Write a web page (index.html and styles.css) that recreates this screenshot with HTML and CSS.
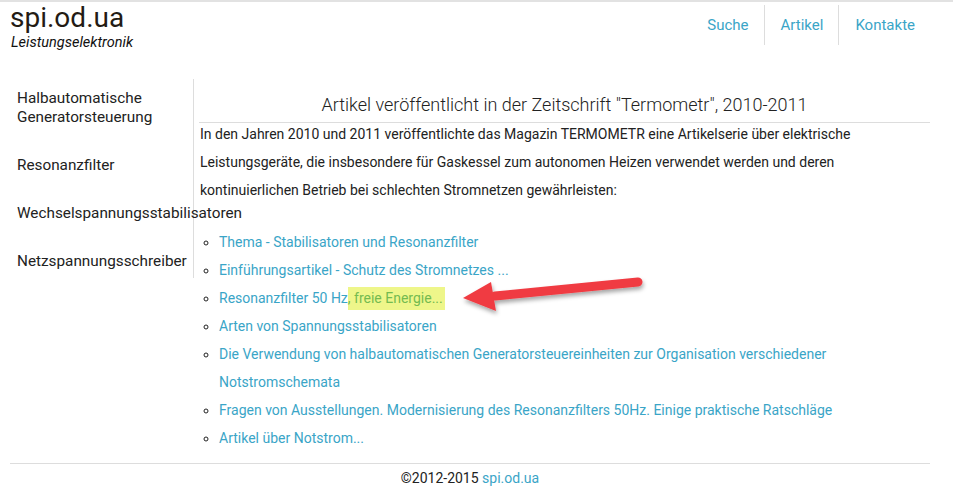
FILE: index.html
```html
<!DOCTYPE html>
<html lang="de">
<head>
    <meta charset="UTF-8">
    <meta name="viewport" content="width=device-width, initial-scale=1.0">
    <title>spi.od.ua - Leistungselektronik</title>
    <link rel="stylesheet" href="styles.css">
</head>
<body>
    <header class="kopf">
        <div class="logo">
            <div class="logo-name">spi.od.ua</div>
            <div class="logo-sub">Leistungselektronik</div>
        </div>
        <ul class="nav">
            <li><a href="#">Suche</a></li>
            <li><a href="#">Artikel</a></li>
            <li><a href="#">Kontakte</a></li>
        </ul>
    </header>

    <div class="haupt">
        <ul class="seitenmenu">
            <li><a href="#">Halbautomatische Generatorsteuerung</a></li>
            <li><a href="#">Resonanzfilter</a></li>
            <li><a href="#">Wechselspannungsstabilisatoren</a></li>
            <li><a href="#">Netzspannungsschreiber</a></li>
        </ul>

        <div class="inhalt">
            <h1>Artikel veröffentlicht in der Zeitschrift "Termometr", 2010-2011</h1>
            <p class="einleitung">In den Jahren 2010 und 2011 veröffentlichte das Magazin TERMOMETR eine Artikelserie über elektrische Leistungsgeräte, die insbesondere für Gaskessel zum autonomen Heizen verwendet werden und deren kontinuierlichen Betrieb bei schlechten Stromnetzen gewährleisten:</p>
            <ul class="artikel">
                <li><a href="#">Thema - Stabilisatoren und Resonanzfilter</a></li>
                <li><a href="#">Einführungsartikel - Schutz des Stromnetzes ...</a></li>
                <li><a href="#">Resonanzfilter 50 Hz<span class="markiert">, freie Energie...</span></a></li>
                <li><a href="#">Arten von Spannungsstabilisatoren</a></li>
                <li><a href="#">Die Verwendung von halbautomatischen Generatorsteuereinheiten zur Organisation verschiedener Notstromschemata</a></li>
                <li><a href="#">Fragen von Ausstellungen. Modernisierung des Resonanzfilters 50Hz. Einige praktische Ratschläge</a></li>
                <li><a href="#">Artikel über Notstrom...</a></li>
            </ul>
        </div>
    </div>

    <footer class="fuss">
        ©2012-2015 <a href="#">spi.od.ua</a>
    </footer>

    <!-- roter Pfeil ueber dem Inhalt -->
    <svg class="pfeil" width="200" height="50" viewBox="0 0 200 50">
        <defs>
            <filter id="schatten" x="-10%" y="-30%" width="120%" height="180%">
                <feDropShadow dx="1" dy="3" stdDeviation="2" flood-color="#000" flood-opacity="0.35"/>
            </filter>
        </defs>
        <g filter="url(#schatten)">
            <line x1="40" y1="27" x2="183" y2="13" stroke="#f03b42" stroke-width="9" stroke-linecap="round"/>
            <polygon points="8,29 36,13 41,42" fill="#f03b42"/>
        </g>
    </svg>
</body>
</html>
```

FILE: styles.css
```css
body {
    font-family: Roboto, "Liberation Sans", Arial, sans-serif;
    margin: 0;
    color: #222;
    background-color: #fff;
    border-top: 2px solid #e2e2e2;
    position: relative;
}
a {
    color: #3aa5c7;
    text-decoration: none;
}
.kopf {
    display: flex;
    justify-content: space-between;
    padding: 0 23px 0 10px;
    height: 77px;
}
.logo-name {
    font-size: 28px;
    line-height: 32px;
    color: #231b14;
}
.logo-sub {
    font-size: 14.5px;
    font-style: italic;
    line-height: 18px;
    margin-top: 0;
    margin-left: 1px;
    color: #111;
}
.nav {
    list-style: none;
    margin: 3px 0 0 0;
    padding: 0;
    display: flex;
    height: 40px;
}
.nav li + li {
    border-left: 1px solid #ddd;
}
.nav a {
    display: block;
    padding: 0 15px 0 16px;
    line-height: 40px;
    font-size: 15px;
}
.haupt {
    display: flex;
    align-items: flex-start;
    padding: 0 23px 0 10px;
}
.seitenmenu {
    list-style: none;
    margin: 0;
    padding: 10px 0 7px 7px;
    width: 176px;
    border-right: 1px solid #ddd;
    font-size: 15.3px;
    line-height: 19px;
}
.seitenmenu li {
    margin-bottom: 29px;
    white-space: nowrap;
}
.seitenmenu li:first-child {
    white-space: normal;
}
.seitenmenu li:last-child {
    margin-bottom: 0;
}
.seitenmenu a {
    color: #222;
}
.inhalt {
    flex: 1;
    padding-left: 5px;
    font-size: 14px;
}
.inhalt h1 {
    font-size: 18px;
    font-weight: 300;
    line-height: 24px;
    text-align: center;
    margin: 14px 0 0 0;
    padding-bottom: 5px;
    border-bottom: 1px solid #ddd;
    color: #222;
}
.einleitung {
    margin: -3px 0 0 1px;
    line-height: 28px;
}
.artikel {
    list-style: circle;
    margin: 24px 0 0 0;
    padding-left: 20px;
    line-height: 28px;
}
.markiert {
    color: #74bb50;
    background-color: #eef68a;
    padding: 3px 2px 4px 0;
}
.fuss {
    margin: 11px 23px 0 10px;
    border-top: 1px solid #ddd;
    text-align: center;
    font-size: 14px;
    line-height: 28px;
    color: #222;
}
.pfeil {
    position: absolute;
    left: 455px;
    top: 267px;
}
```
